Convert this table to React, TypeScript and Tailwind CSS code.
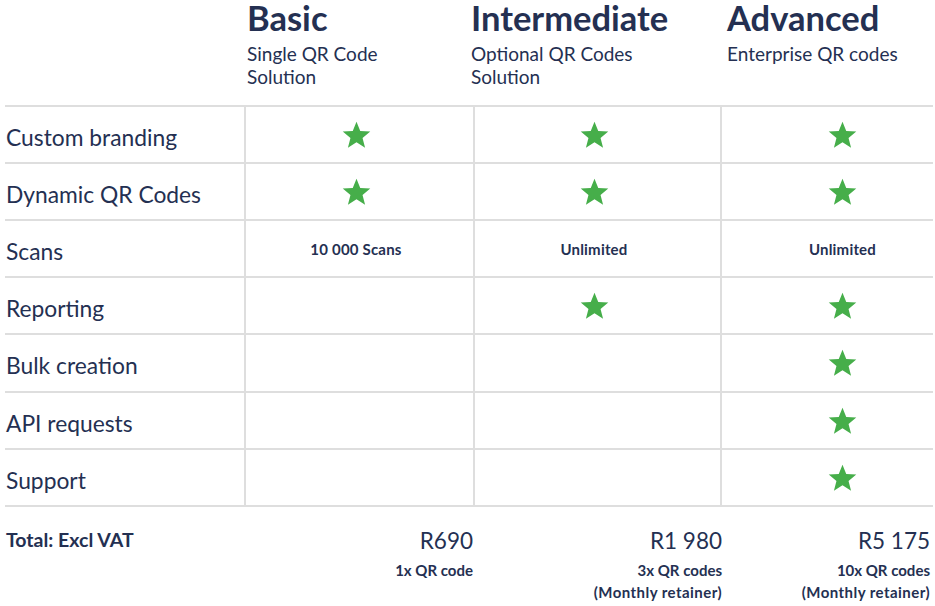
import React from "react";

const Star = () => (
  <svg width="29" height="28" viewBox="0 0 24 23" className="block">
    <polygon
      points="12,0.5 15.1,8.2 23.4,8.7 17,14 19.1,22.1 12,17.6 4.9,22.1 7,14 0.6,8.7 8.9,8.2"
      fill="#46ae4a"
    />
  </svg>
);

type Cell = "star" | "" | string;

const rows: { label: string; cells: Cell[]; h: string }[] = [
  { label: "Custom branding", cells: ["star", "star", "star"], h: "h-[57px]" },
  { label: "Dynamic QR Codes", cells: ["star", "star", "star"], h: "h-[57px]" },
  { label: "Scans", cells: ["10 000 Scans", "Unlimited", "Unlimited"], h: "h-[57px]" },
  { label: "Reporting", cells: ["", "star", "star"], h: "h-[57px]" },
  { label: "Bulk creation", cells: ["", "", "star"], h: "h-[58px]" },
  { label: "API requests", cells: ["", "", "star"], h: "h-[57px]" },
  { label: "Support", cells: ["", "", "star"], h: "h-[57px]" },
];

const cellPad = ["pr-[7px]", "pr-[7px]", "pl-[30px]"];

export default function App() {
  return (
    <div
      className="w-[935px] h-[606px] bg-white text-[#243052] overflow-hidden"
      style={{ fontFamily: "Lato, 'Open Sans', sans-serif" }}
    >
      {/* Header */}
      <div className="flex h-[105px]">
        <div className="w-[247px] shrink-0" />
        <div className="w-[224px] shrink-0">
          <div className="text-[34.5px] font-bold leading-[36px]">Basic</div>
          <div className="mt-[6px] text-[19px] leading-[23px]">
            Single QR Code
            <br />
            Solution
          </div>
        </div>
        <div className="w-[256px] shrink-0">
          <div className="text-[34.5px] font-bold leading-[36px]">Intermediate</div>
          <div className="mt-[6px] text-[19px] leading-[23px]">
            Optional QR Codes
            <br />
            Solution
          </div>
        </div>
        <div className="flex-1">
          <div className="text-[34.5px] font-bold leading-[36px]">Advanced</div>
          <div className="mt-[6px] text-[19px] leading-[23px]">Enterprise QR codes</div>
        </div>
      </div>

      {/* Table */}
      <div className="ml-[5px] w-[928px] border-t-2 border-[#dedede]">
        {rows.map((r) => (
          <div
            key={r.label}
            className={`grid grid-cols-[239px_229px_247px_213px] ${r.h} border-b-2 border-[#dedede]`}
          >
            <div className="flex items-center pl-[1px] pt-[5px] text-[22.8px] leading-[27px]">
              {r.label}
            </div>
            {r.cells.map((c, i) => (
              <div
                key={i}
                className={`flex items-center justify-center border-l-2 border-[#dedede] ${cellPad[i]}`}
              >
                {c === "star" ? (
                  <Star />
                ) : c ? (
                  <span className="text-[15px] font-bold leading-[20px] tracking-[0.2px]">{c}</span>
                ) : null}
              </div>
            ))}
          </div>
        ))}
      </div>

      {/* Footer */}
      <div className="ml-[5px] w-[928px] grid grid-cols-[239px_229px_249px_211px] pt-[20px]">
        <div className="pl-[1px] pt-[1px] text-[19.5px] font-bold leading-[24px]">Total: Excl VAT</div>
        <div className="text-right">
          <div className="text-[22.5px] leading-[28px]">R690</div>
          <div className="mt-[4px] text-[15px] font-bold leading-[22px]">1x QR code</div>
        </div>
        <div className="text-right">
          <div className="text-[22.5px] leading-[28px]">R1 980</div>
          <div className="mt-[4px] text-[15px] font-bold leading-[22px]">
            3x QR codes
            <br />
            <span className="tracking-[0.45px]">(Monthly retainer)</span>
          </div>
        </div>
        <div className="text-right pr-[3px]">
          <div className="text-[22.5px] leading-[28px]">R5 175</div>
          <div className="mt-[4px] text-[15px] font-bold leading-[22px]">
            10x QR codes
            <br />
            <span className="tracking-[0.45px]">(Monthly retainer)</span>
          </div>
        </div>
      </div>
    </div>
  );
}
